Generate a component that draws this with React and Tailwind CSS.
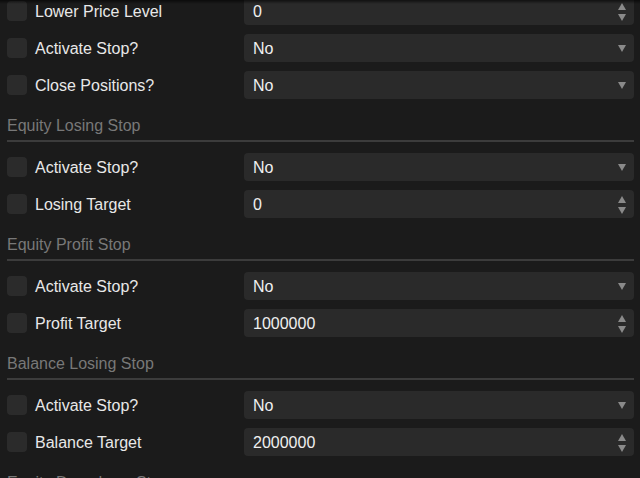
import React from "react";

const sections = [
  {
    title: null,
    rows: [
      { label: "Lower Price Level", type: "number", value: "0" },
      { label: "Activate Stop?", type: "select", value: "No" },
      { label: "Close Positions?", type: "select", value: "No" },
    ],
  },
  {
    title: "Equity Losing Stop",
    rows: [
      { label: "Activate Stop?", type: "select", value: "No" },
      { label: "Losing Target", type: "number", value: "0" },
    ],
  },
  {
    title: "Equity Profit Stop",
    rows: [
      { label: "Activate Stop?", type: "select", value: "No" },
      { label: "Profit Target", type: "number", value: "1000000" },
    ],
  },
  {
    title: "Balance Losing Stop",
    rows: [
      { label: "Activate Stop?", type: "select", value: "No" },
      { label: "Balance Target", type: "number", value: "2000000" },
    ],
  },
  {
    title: "Equity Drawdown Stop",
    rows: [],
  },
];

const SelectArrow = () => (
  <svg width="8" height="7" viewBox="0 0 8 7" className="shrink-0">
    <path d="M0 0 L8 0 L4 7 Z" fill="#8a8a8a" />
  </svg>
);

const Spinner = () => (
  <div className="flex flex-col items-center gap-[4px] mt-[1px]">
    <svg width="8" height="7" viewBox="0 0 8 7">
      <path d="M4 0 L8 7 L0 7 Z" fill="#8a8a8a" />
    </svg>
    <svg width="8" height="7" viewBox="0 0 8 7">
      <path d="M0 0 L8 0 L4 7 Z" fill="#8a8a8a" />
    </svg>
  </div>
);

const Row = ({ label, type, value }) => (
  <div className="flex items-center h-[28px]">
    <div className="flex items-center w-[237px] shrink-0">
      <div className="w-[20px] h-[20px] rounded-[4px] bg-[#2b2b2b] shrink-0" />
      <span className="ml-[8px] pt-[1px] text-[16px] leading-[20px] text-[#e8e8e8]">{label}</span>
    </div>
    <div className="flex-1 h-full flex items-center justify-between rounded-[4px] bg-[#2a2a2a] pl-[9px] pr-[8px]">
      <span className="pt-[1px] text-[16px] leading-[20px] text-[#f0f0f0]">{value}</span>
      {type === "select" ? <SelectArrow /> : <Spinner />}
    </div>
  </div>
);

export default function App() {
  return (
    <div
      className="relative w-[640px] h-[478px] overflow-hidden bg-[#1b1b1b]"
      style={{ fontFamily: '"Liberation Sans", Arial, sans-serif' }}
    >
      <div className="absolute top-0 left-0 right-0 h-[4px] bg-gradient-to-b from-black/60 to-transparent z-10" />
      <div className="flex flex-col gap-[9px] mt-[-3px] pl-[7px] pr-[6px]">
        {sections.map((s, i) => (
          <React.Fragment key={i}>
            {s.title && (
              <div className="pt-[8px] pb-[4px] mb-[2px] border-b-2 border-[#3c3c3c] text-[16px] leading-[20px] text-[#787878]">
                {s.title}
              </div>
            )}
            {s.rows.map((r, j) => (
              <Row key={j} {...r} />
            ))}
          </React.Fragment>
        ))}
      </div>
    </div>
  );
}
